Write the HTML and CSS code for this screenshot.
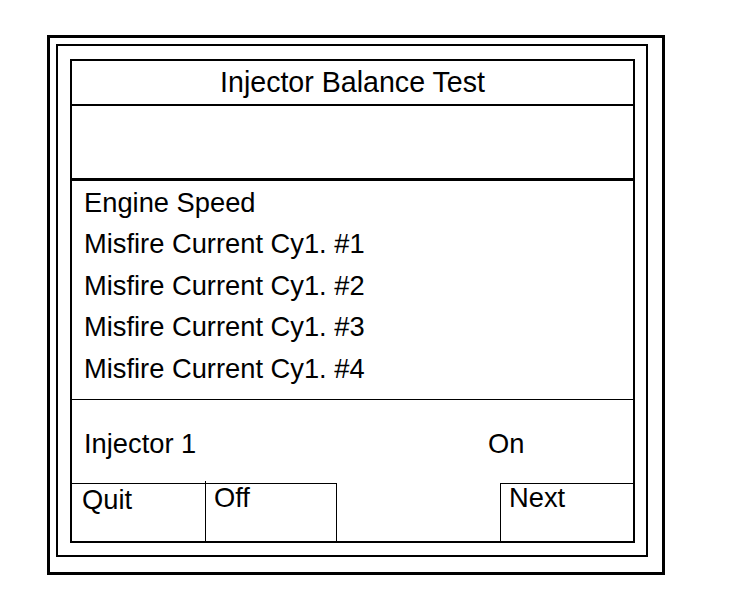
FILE: index.html
```html
<!DOCTYPE html>
<html lang="en">
<head>
  <meta charset="UTF-8">
  <meta name="viewport" content="width=device-width, initial-scale=1.0">
  <title>Injector Balance Test</title>
  <link rel="stylesheet" href="styles.css">
</head>
<body>

  <div class="frame">
    <div class="panel">
      <div class="screen">
        <div class="title">Injector Balance Test</div>
        <div class="message"></div>

        <ul class="params">
          <li>Engine Speed</li>
          <li>Misfire Current Cy1. #1</li>
          <li>Misfire Current Cy1. #2</li>
          <li>Misfire Current Cy1. #3</li>
          <li>Misfire Current Cy1. #4</li>
        </ul>

        <div class="status">
          <span class="status-label">Injector 1</span>
          <span class="status-value">On</span>
        </div>

        <div class="keys">
          <div class="key key-quit">Quit</div>
          <div class="key">Off</div>
          <div class="key key-blank"></div>
          <div class="key key-next">Next</div>
        </div>
      </div>
    </div>
  </div>

</body>
</html>
```

FILE: styles.css
```css
* {
  box-sizing: border-box;
}

body {
  font-family: 'Liberation Sans', Arial, Helvetica, sans-serif;
  margin: 0;
  padding: 0;
  background-color: white;
  color: black;
}

/* three nested outlines */
.frame {
  width: 618px;
  margin: 35px 0 0 47px;
  padding: 6px 14px 15px 6px;
  border: 3px solid black;
}

.panel {
  padding: 13px 11px 12px 12px;
  border: 2px solid black;
}

.screen {
  border: 2px solid black;
  font-size: 27.3px;
}

.title {
  height: 45px;
  font-size: 28.6px;
  line-height: 43px;
  text-align: center;
  border-bottom: 2px solid black;
}

.message {
  height: 75px;
  border-bottom: 3px solid black;
}

.params {
  list-style: none;
  margin: 0;
  height: 219px;
  padding: 1px 0 0 12px;
  line-height: 41.4px;
  border-bottom: 1px solid black;
}

.status {
  display: flex;
  height: 83px;
  padding: 5px 0 0 12px;
  line-height: 78px;
}

.status-label {
  width: 404px;
}

.keys {
  display: grid;
  grid-template-columns: 134px 131px 163px 1fr;
  height: 58px;
}

.key {
  padding-left: 8px;
  line-height: 28px;
  border-top: 1px solid black;
  border-right: 1px solid black;
}

.key-quit {
  position: relative;
  padding: 2px 0 0 10px;
}

/* divider pokes a little above the key row */
.key-quit::after {
  content: '';
  position: absolute;
  top: -3px;
  right: -1px;
  width: 1px;
  height: 3px;
  background-color: black;
}

.key-blank {
  border-top: none;
  border-right: none;
}

.key-next {
  border-left: 1px solid black;
  border-right: none;
}
```
